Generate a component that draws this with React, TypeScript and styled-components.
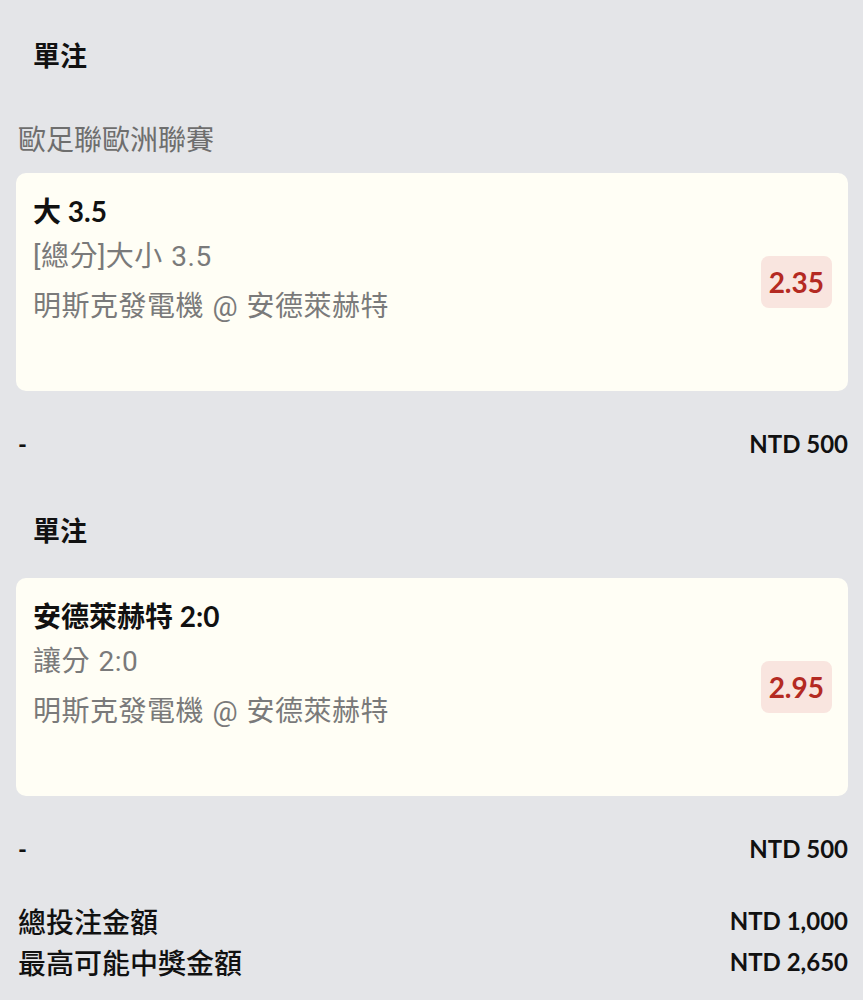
import styled, { createGlobalStyle } from "styled-components";

const GlobalStyle = createGlobalStyle`
  body {
    margin: 0;
    background: #e4e5e8;
    font-family: "Lato", "Noto Sans CJK TC", sans-serif;
    color: #141414;
  }
`;

type Bet = {
  league?: string;
  pick: string;
  market: string;
  match: string;
  odds: string;
  stake: string;
};

const bets: Bet[] = [
  {
    league: "歐足聯歐洲聯賽",
    pick: "大 3.5",
    market: "[總分]大小 3.5",
    match: "明斯克發電機 @ 安德萊赫特",
    odds: "2.35",
    stake: "NTD 500",
  },
  {
    pick: "安德萊赫特 2:0",
    market: "讓分 2:0",
    match: "明斯克發電機 @ 安德萊赫特",
    odds: "2.95",
    stake: "NTD 500",
  },
];

const App = () => {
  return (
    <>
      <GlobalStyle />
      <Page>
        {bets.map((bet, i) => (
          <Section key={i} $first={i === 0}>
            <StakeType>單注</StakeType>
            {bet.league && <League>{bet.league}</League>}
            <Card $tight={!bet.league}>
              <Info>
                <Pick>{bet.pick}</Pick>
                <SubLine>{bet.market}</SubLine>
                <SubLine>{bet.match}</SubLine>
              </Info>
              <Odds>{bet.odds}</Odds>
            </Card>
            <AmountRow>
              <span>-</span>
              <span>{bet.stake}</span>
            </AmountRow>
          </Section>
        ))}
        <Summary>
          <SummaryRow>
            <Label>總投注金額</Label>
            <Amount>NTD 1,000</Amount>
          </SummaryRow>
          <SummaryRow>
            <Label>最高可能中獎金額</Label>
            <Amount>NTD 2,650</Amount>
          </SummaryRow>
        </Summary>
      </Page>
    </>
  );
};

export default App;

const Page = styled.div`
  padding: 0 15px 18px 16px;
  display: flex;
  flex-direction: column;
`;

const Section = styled.section<{ $first: boolean }>`
  display: flex;
  flex-direction: column;
  margin-top: ${(p) => (p.$first ? "36px" : "52px")};
`;

const StakeType = styled.div`
  padding-left: 17px;
  font-family: "Noto Sans CJK TC", sans-serif;
  font-size: 27px;
  font-weight: 700;
  line-height: 38px;
  color: #111;
`;

const League = styled.div`
  margin-top: 45px;
  padding-left: 2px;
  font-family: "Noto Sans CJK TC", sans-serif;
  font-size: 28px;
  line-height: 38px;
  color: #6e6e6e;
`;

const Card = styled.div<{ $tight: boolean }>`
  margin-top: ${(p) => (p.$tight ? "29px" : "16px")};
  height: 218px;
  box-sizing: border-box;
  padding: 17px 16px 59px 17px;
  background: #fffef5;
  border-radius: 10px;
  display: flex;
  align-items: center;
`;

const Info = styled.div`
  flex: 1;
  display: flex;
  flex-direction: column;
  align-self: flex-start;
`;

const Pick = styled.div`
  font-family: "Lato", "Noto Sans CJK TC", sans-serif;
  font-size: 28px;
  font-weight: 700;
  line-height: 42px;
  color: #111;
`;

const SubLine = styled.div`
  font-family: "Roboto", "Noto Sans CJK TC", sans-serif;
  font-size: 28px;
  letter-spacing: 0.5px;
  word-spacing: 1px;
  line-height: 50px;
  color: #7a7a7a;
`;

const Odds = styled.div`
  align-self: center;
  margin-top: 42px;
  height: 52px;
  padding: 0 8px;
  border-radius: 8px;
  background: #f9e5df;
  color: #b42a22;
  font-family: "Lato", sans-serif;
  font-size: 28px;
  font-weight: 700;
  line-height: 52px;
`;

const AmountRow = styled.div`
  margin-top: 38px;
  padding-left: 2px;
  display: flex;
  justify-content: space-between;
  font-family: "Lato", sans-serif;
  font-size: 24px;
  font-weight: 700;
  line-height: 30px;
  color: #111;
`;

const Summary = styled.div`
  margin-top: 36px;
  padding-left: 2px;
  display: flex;
  flex-direction: column;
`;

const SummaryRow = styled.div`
  display: flex;
  justify-content: space-between;
  align-items: center;
  height: 41px;
`;

const Label = styled.span`
  font-family: "Noto Sans CJK TC", sans-serif;
  font-size: 28px;
  font-weight: 500;
  color: #111;
`;

const Amount = styled.span`
  font-family: "Lato", sans-serif;
  font-size: 24px;
  font-weight: 700;
  color: #111;
`;
